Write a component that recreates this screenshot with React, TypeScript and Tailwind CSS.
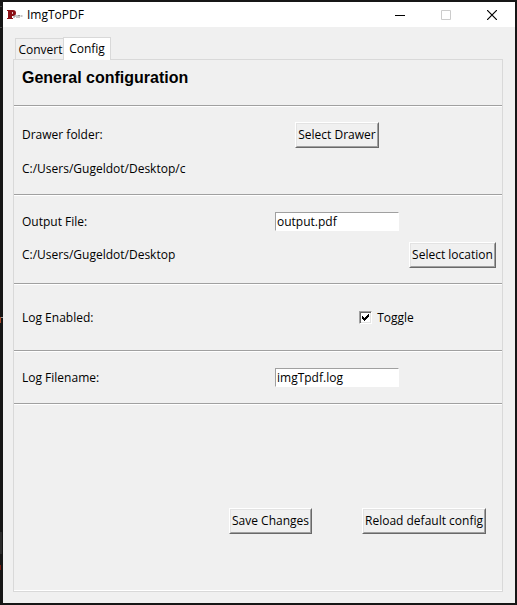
import { useState, type ReactNode } from "react";

function ToolButton({ children }: { children: ReactNode }) {
  return (
    <button
      type="button"
      className="h-[26px] border border-t-white border-l-white border-r-[#696969] border-b-[#696969] bg-[#f0f0f0] whitespace-nowrap"
    >
      <span className="flex h-full items-center border border-t-[#e3e3e3] border-l-[#e3e3e3] border-r-[#a0a0a0] border-b-[#a0a0a0] px-px">
        {children}
      </span>
    </button>
  );
}

function Field({ id, value }: { id: string; value: string }) {
  return (
    <input
      id={id}
      type="text"
      defaultValue={value}
      className="h-[19px] w-[124px] justify-self-center border border-t-[#a0a0a0] border-l-[#a0a0a0] border-r-white border-b-white bg-white px-px outline-none"
    />
  );
}

const row = "grid grid-cols-[1fr_132px_99px] items-center";
const rule = "border-b border-[#a0a0a0] shadow-[0_1px_0_#fff] mb-px";

export default function App() {
  const [log, setLog] = useState(true);
  return (
    <div className="relative flex min-h-screen flex-col bg-[#161616] pt-[2px] pr-[2px] pb-[2px] pl-[3px] font-['Open_Sans','Noto_Sans',sans-serif] text-[12px] leading-[18px] text-black">
      <svg className="absolute top-0 left-0 h-[605px] w-[3px]" viewBox="0 0 3 605" shapeRendering="crispEdges" aria-hidden="true">
        <path d="M0 6h2v1H0zM0 27h2v1H0z" fill="#444" />
        <path d="M0 532h2v22H0z" fill="#2b2b2b" />
        <path d="M0 317h1v6H0z" fill="#a5482a" />
        <path d="M1 317h2v1H1z" fill="#999" />
        <path d="M0 565h1v5H0z" fill="#7a1c10" />
      </svg>
      <header className="flex h-[25px] items-center bg-white">
        <svg className="ml-[3px] h-[14px] w-[17px]" viewBox="0 0 17 14" aria-hidden="true">
          <path fillRule="evenodd" d="M1 2h6q3 0 3 3t-3 3H6v2h1v1H1v-1h1V3H1zM6 4v2q1 0 1-1T6 4z" fill="#8b1016" />
          <path d="M8 10V8h2M11 7v3M12 7.500h2M13 7v3M14.500 8h2" stroke="#8c8c8c" fill="none" />
        </svg>
        <h1 className="ml-1 flex-1">ImgToPDF</h1>
        <button type="button" aria-label="Minimize" className="flex w-[46px] justify-center">
          <svg width="10" height="10" viewBox="0 0 10 10" shapeRendering="crispEdges"><path d="M0 5.500h10" stroke="#000" /></svg>
        </button>
        <button type="button" aria-label="Maximize" disabled className="flex w-[46px] justify-center">
          <svg width="10" height="10" viewBox="0 0 10 10"><path d="M.5.500h9v9h-9z" fill="none" stroke="#ccc" /></svg>
        </button>
        <button type="button" aria-label="Close" className="flex w-[46px] justify-center">
          <svg width="10" height="10" viewBox="0 0 10 10"><path d="M0 0l10 10M10 0L0 10" stroke="#000" strokeWidth="1.200" /></svg>
        </button>
      </header>
      <main className="flex flex-1 flex-col bg-[#f0f0f0] pt-[10px] pr-3 pb-[11px] pl-[10px]">
        <div role="tablist" className="z-10 -mb-px flex items-end pl-[2px]">
          <button role="tab" aria-selected="false" className="mb-px h-[21px] w-12 border border-r-0 border-b-0 border-[#d9d9d9] pt-[2px] pl-[2px]">
            Convert
          </button>
          <button role="tab" aria-selected="true" className="h-[23px] w-12 border border-b-0 border-[#d9d9d9] bg-white">
            Config
          </button>
        </div>
        <section className="flex flex-1 flex-col border border-[#d9d9d9] shadow-[inset_0_-1px_0_#fff]">
          <h2 className={`${rule} h-[46px] pt-2 pl-2 font-['Liberation_Sans',Arial,sans-serif] text-base leading-5 font-bold`}>
            General configuration
          </h2>
          <div className={`${rule} pt-[15px] pb-4`}>
            <div className={row}>
              <span className="pl-2">Drawer folder:</span>
              <div className="flex justify-center"><ToolButton>Select Drawer</ToolButton></div>
            </div>
            <p className="mt-3 pl-2">C:/Users/Gugeldot/Desktop/c</p>
          </div>
          <div className={`${rule} pt-4 pb-[15px]`}>
            <div className={row}>
              <label htmlFor="output" className="pl-2">Output File:</label>
              <Field id="output" value="output.pdf" />
            </div>
            <div className={`${row} mt-[11px]`}>
              <span className="col-span-2 pl-2">C:/Users/Gugeldot/Desktop</span>
              <div className="flex justify-center"><ToolButton>Select location</ToolButton></div>
            </div>
          </div>
          <div className={`${rule} ${row} h-[66px]`}>
            <span className="pl-2">Log Enabled:</span>
            <label className="col-span-2 flex items-center justify-center gap-[5px]">
              <span className="grid">
                <input
                  type="checkbox"
                  checked={log}
                  onChange={(e) => setLog(e.target.checked)}
                  className="peer col-start-1 row-start-1 size-[13px] appearance-none border border-t-[#a0a0a0] border-l-[#a0a0a0] border-r-white border-b-white bg-white shadow-[inset_1px_1px_0_#696969,inset_-1px_-1px_0_#e3e3e3]"
                />
                <svg
                  className="pointer-events-none invisible col-start-1 row-start-1 size-[13px] peer-checked:visible"
                  viewBox="0 0 13 13"
                  shapeRendering="crispEdges"
                >
                  <path d="M3 5h1v1h1v1h1V6h1V5h1V4h1V3h1v3H9v1H8v1H7v1H6v1H5V9H4V8H3z" fill="#000" />
                </svg>
              </span>
              Toggle
            </label>
          </div>
          <div className={`${rule} ${row} h-[52px]`}>
            <label htmlFor="logname" className="pl-2">Log Filename:</label>
            <Field id="logname" value="imgTpdf.log" />
          </div>
          <div className="mt-auto flex justify-end gap-[50px] pt-6 pr-4 pb-[57px]">
            <ToolButton>Save Changes</ToolButton>
            <ToolButton>Reload default config</ToolButton>
          </div>
        </section>
      </main>
    </div>
  );
}
